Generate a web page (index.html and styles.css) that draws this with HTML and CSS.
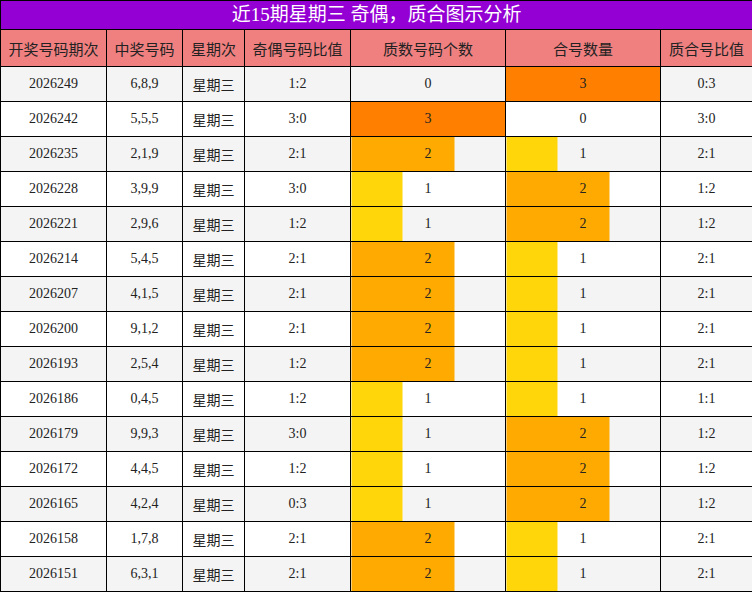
FILE: index.html
```html
<!DOCTYPE html>
<html lang="zh">
<head>
<meta charset="utf-8">
<link rel="stylesheet" href="styles.css">
</head>
<body>
<table class="tbl">
<colgroup>
<col class="c1"><col class="c2"><col class="c3"><col class="c4"><col class="c5"><col class="c6"><col class="c7">
</colgroup>
<thead>
<tr><th colspan="7" class="title">近15期星期三 奇偶，质合图示分析</th></tr>
<tr class="head"><th>开奖号码期次</th><th>中奖号码</th><th>星期次</th><th>奇偶号码比值</th><th>质数号码个数</th><th>合号数量</th><th>质合号比值</th></tr>
</thead>
<tbody>
<tr class="odd"><td>2026249</td><td>6,8,9</td><td class="cn">星期三</td><td>1:2</td><td class="b0">0</td><td class="b3">3</td><td>0:3</td></tr>
<tr><td>2026242</td><td>5,5,5</td><td class="cn">星期三</td><td>3:0</td><td class="b3">3</td><td class="b0">0</td><td>3:0</td></tr>
<tr class="odd"><td>2026235</td><td>2,1,9</td><td class="cn">星期三</td><td>2:1</td><td class="b2">2</td><td class="b1">1</td><td>2:1</td></tr>
<tr><td>2026228</td><td>3,9,9</td><td class="cn">星期三</td><td>3:0</td><td class="b1">1</td><td class="b2">2</td><td>1:2</td></tr>
<tr class="odd"><td>2026221</td><td>2,9,6</td><td class="cn">星期三</td><td>1:2</td><td class="b1">1</td><td class="b2">2</td><td>1:2</td></tr>
<tr><td>2026214</td><td>5,4,5</td><td class="cn">星期三</td><td>2:1</td><td class="b2">2</td><td class="b1">1</td><td>2:1</td></tr>
<tr class="odd"><td>2026207</td><td>4,1,5</td><td class="cn">星期三</td><td>2:1</td><td class="b2">2</td><td class="b1">1</td><td>2:1</td></tr>
<tr><td>2026200</td><td>9,1,2</td><td class="cn">星期三</td><td>2:1</td><td class="b2">2</td><td class="b1">1</td><td>2:1</td></tr>
<tr class="odd"><td>2026193</td><td>2,5,4</td><td class="cn">星期三</td><td>1:2</td><td class="b2">2</td><td class="b1">1</td><td>2:1</td></tr>
<tr><td>2026186</td><td>0,4,5</td><td class="cn">星期三</td><td>1:2</td><td class="b1">1</td><td class="b1">1</td><td>1:1</td></tr>
<tr class="odd"><td>2026179</td><td>9,9,3</td><td class="cn">星期三</td><td>3:0</td><td class="b1">1</td><td class="b2">2</td><td>1:2</td></tr>
<tr><td>2026172</td><td>4,4,5</td><td class="cn">星期三</td><td>1:2</td><td class="b1">1</td><td class="b2">2</td><td>1:2</td></tr>
<tr class="odd"><td>2026165</td><td>4,2,4</td><td class="cn">星期三</td><td>0:3</td><td class="b1">1</td><td class="b2">2</td><td>1:2</td></tr>
<tr><td>2026158</td><td>1,7,8</td><td class="cn">星期三</td><td>2:1</td><td class="b2">2</td><td class="b1">1</td><td>2:1</td></tr>
<tr class="odd"><td>2026151</td><td>6,3,1</td><td class="cn">星期三</td><td>2:1</td><td class="b2">2</td><td class="b1">1</td><td>2:1</td></tr>
</tbody>
</table>
</body>
</html>
```
FILE: styles.css
```css
html, body { margin: 0; padding: 0; background: #fff; }
.tbl {
  border-collapse: collapse;
  table-layout: fixed;
  width: 752px;
  font-family: "Liberation Serif", "Noto Sans CJK SC", serif;
  color: #222;
}
.c1 { width: 106px; }
.c2 { width: 76px; }
.c3 { width: 62px; }
.c4 { width: 106px; }
.c5 { width: 155px; }
.c6 { width: 155px; }
.c7 { width: 92px; }
.tbl th, .tbl td {
  border: 1px solid #000;
  padding: 0;
  text-align: center;
  font-weight: normal;
}
.title {
  background: #9400d3;
  color: #fff;
  height: 28px;
  font-size: 19px;
  line-height: 28px;
  font-family: "Liberation Serif", "Noto Sans CJK SC", serif;
}
.head th {
  background: #f08080;
  height: 36px;
  font-size: 15px;
  font-family: "Noto Sans CJK SC", sans-serif;
}
.tbl td {
  height: 34px;
  font-size: 14px;
}
.odd td { background-color: #f4f4f4; }
.tbl td.b1 { background-image: linear-gradient(to right, #ffd60a 33.3%, transparent 33.3%); }
.tbl td.b2 { background-image: linear-gradient(to right, #ffaa00 66.6%, transparent 66.6%); }
.tbl td.b3 { background-color: #ff8000; }
```
